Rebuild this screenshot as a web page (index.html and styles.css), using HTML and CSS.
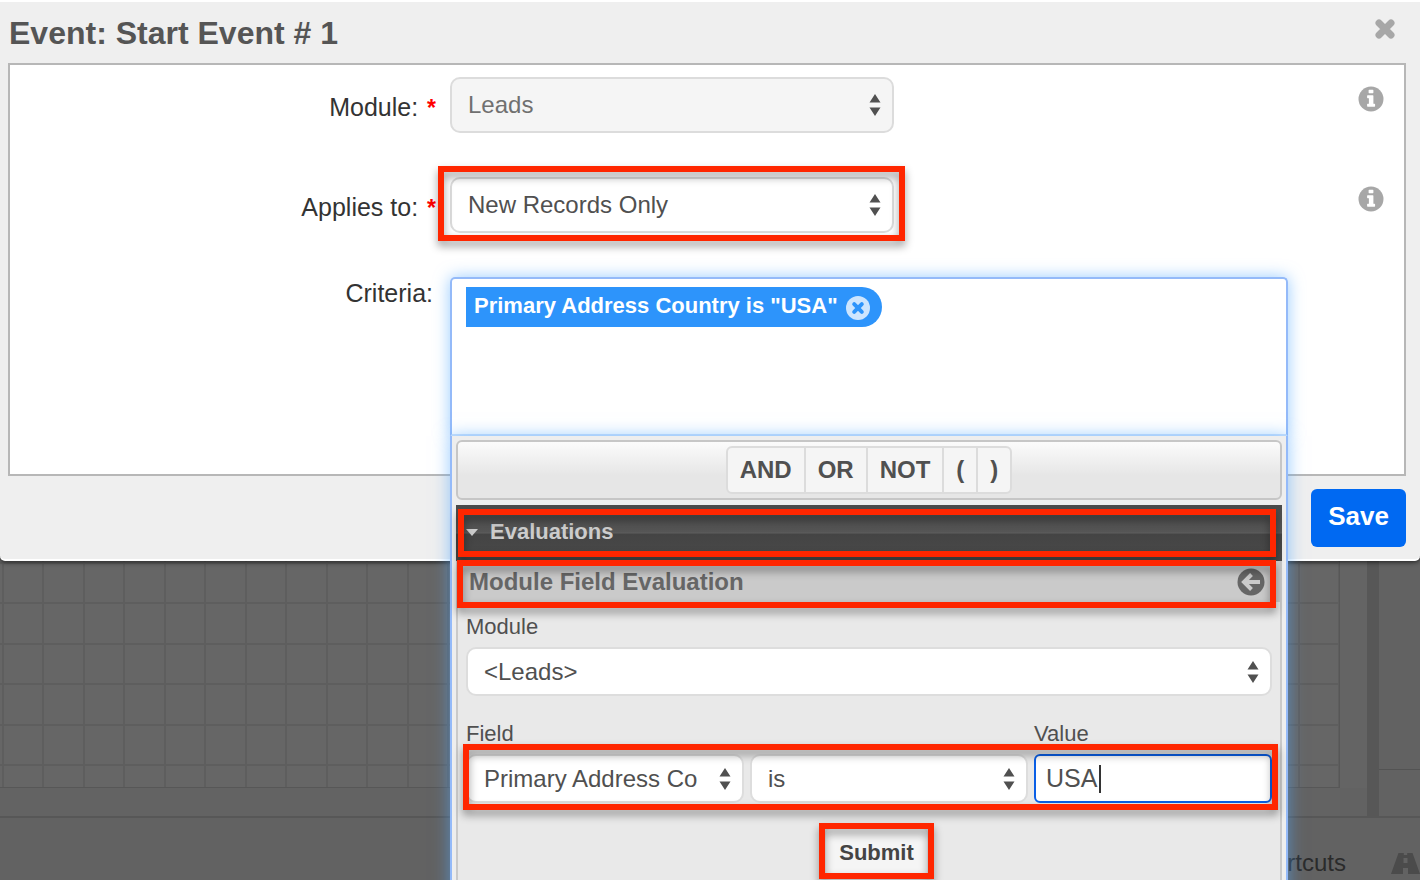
FILE: index.html
```html
<!DOCTYPE html>
<html lang="en">
<head>
<meta charset="utf-8">
<title>Event: Start Event # 1</title>
<link rel="stylesheet" href="styles.css">
</head>
<body>
<svg class="sprite" aria-hidden="true">
  <symbol id="updown" viewBox="0 0 12 22"><path d="M6 0l5.500 8.500H.5zM6 22L.5 13.500h11z"/></symbol>
  <symbol id="info" viewBox="0 0 26 26"><circle cx="13" cy="13" r="12.500"/><path fill="#fff" d="M11.200 3.800h3.600a.6.6 0 0 1 .6.6v2.200a.6.6 0 0 1-.6.6h-3.600a.6.6 0 0 1-.6-.6V4.400a.6.6 0 0 1 .6-.6zM9.700 9.200h5.100a.6.6 0 0 1 .6.6v7.900h1.100a.6.6 0 0 1 .6.6v1.800a.6.6 0 0 1-.6.6H9.700a.6.6 0 0 1-.6-.6v-1.800a.6.6 0 0 1 .6-.6h1.200V12.200H9.700a.6.6 0 0 1-.6-.6V9.800a.6.6 0 0 1 .6-.6z"/></symbol>
</svg>
<div class="screen">
  <div class="workspace">
    <div class="designer">
      <div class="canvas"></div>
      <div class="track-right"></div>
      <div class="track-bottom"></div>
    </div>
    <div class="sidebar"><div class="sidebar-block"></div></div>
    <div class="statusbar">
      <span>Shortcuts</span>
      <svg class="road" viewBox="0 0 29 21"><path fill-rule="evenodd" d="M7.500 0h14L29 21H0zM12.800 0v2h3.400V0zM12.500 5v5h4V5zM12 15v6h5v-6z"/></svg>
    </div>
  </div>

  <div class="overlay">
    <form class="dialog" role="dialog" aria-labelledby="dialog-title">
      <header class="dialog-head">
        <h1 id="dialog-title">Event: Start Event # 1</h1>
        <button class="close" type="button" aria-label="Close">
          <svg viewBox="0 0 22 22"><path d="M5 5l12 12M17 5L5 17"/></svg>
        </button>
      </header>

      <div class="panel">
        <label class="label" for="module">Module: <span class="required">*</span></label>
        <div class="select short">
          <select id="module" disabled><option>Leads</option></select>
          <svg><use href="#updown"/></svg>
        </div>
        <button class="info" type="button" aria-label="About module"><svg><use href="#info"/></svg></button>

        <label class="label" for="applies">Applies to: <span class="required">*</span></label>
        <div class="select short">
          <select id="applies"><option>New Records Only</option></select>
          <svg><use href="#updown"/></svg>
          <span class="mark mark-applies"></span>
        </div>
        <button class="info" type="button" aria-label="About applies to"><svg><use href="#info"/></svg></button>

        <span class="label label-top" id="criteria-label">Criteria:</span>
        <div class="criteria" role="group" aria-labelledby="criteria-label">
          <div class="criteria-box">
            <span class="tag">Primary Address Country is "USA"
              <button type="button" aria-label="Remove criterion">
                <svg viewBox="0 0 24 24"><circle cx="12" cy="12" r="12"/><path d="M8.200 8.200l7.600 7.600M15.800 8.200l-7.600 7.600"/></svg>
              </button>
            </span>
          </div>

          <div class="builder">
            <div class="toolbar">
              <div class="operators">
                <button type="button">AND</button><button type="button">OR</button><button type="button">NOT</button><button type="button">(</button><button type="button">)</button>
              </div>
            </div>

            <div class="section-head">
              <svg class="caret-down" viewBox="0 0 12 7"><path d="M0 0h12L6 7z"/></svg>
              <h2>Evaluations</h2>
              <span class="mark mark-section"></span>
            </div>

            <div class="evaluation">
              <div class="evaluation-head">
                <h3>Module Field Evaluation</h3>
                <button class="back" type="button" aria-label="Back">
                  <svg viewBox="0 0 28 28"><circle cx="14" cy="14" r="13.500"/><path d="M14.500 6.500L7 14l7.500 7.500M7.500 14H23"/></svg>
                </button>
                <span class="mark mark-evaluation"></span>
              </div>
              <div class="evaluation-body">
                <label class="caption" for="eval-module">Module</label>
                <div class="select small">
                  <select id="eval-module"><option>&lt;Leads&gt;</option></select>
                  <svg><use href="#updown"/></svg>
                </div>
                <div class="captions">
                  <label class="caption" for="eval-field">Field</label>
                  <label class="caption" for="eval-value">Value</label>
                </div>
                <div class="fields">
                  <div class="select small">
                    <select id="eval-field"><option>Primary Address Country</option></select>
                    <svg><use href="#updown"/></svg>
                  </div>
                  <div class="select small">
                    <select aria-label="Operator"><option>is</option></select>
                    <svg><use href="#updown"/></svg>
                  </div>
                  <div class="value">
                    <input id="eval-value" type="text" value="USA">
                    <span class="text-cursor"></span>
                  </div>
                  <span class="mark mark-fields"></span>
                </div>
                <div class="actions">
                  <button class="submit" type="submit">Submit<span class="mark mark-submit"></span></button>
                </div>
              </div>
            </div>
          </div>
        </div>
      </div>

      <footer class="dialog-foot"><button class="save" type="button">Save</button></footer>
    </form>
  </div>
</div>
</body>
</html>
```
FILE: styles.css
```css
* { box-sizing: border-box; }

body {
  margin: 0;
  color: #444;
  font: 25px/30px "Liberation Sans", Arial, sans-serif;
}

h1, h2, h3 { margin: 0; }

button, select, input {
  margin: 0;
  padding: 0;
  border: 0;
  background: none;
  color: inherit;
  font: inherit;
}

svg { display: block; fill: currentColor; }
.sprite { position: absolute; width: 0; height: 0; }

.screen {
  display: grid;
  grid-template: 100vh / minmax(0, 1fr);
  overflow: hidden;
}
.workspace, .overlay { grid-area: 1 / 1; min-height: 0; }

/* Dimmed designer behind the dialog */
.workspace {
  display: grid;
  grid-template: minmax(0, 1fr) 64px / minmax(0, 1fr) 41px;
  background: #626262;
}
.designer {
  display: grid;
  grid-template: minmax(0, 1fr) 28px / minmax(0, 1fr) 27px;
  border-right: 12px solid #575757;
}
.canvas {
  border-right: 1px solid #575757;
  border-bottom: 1px solid #575757;
  background-color: #666;
  background-image:
    linear-gradient(90deg, #5e5e5e 2px, transparent 2px 40px, #5e5e5e 40px 42px, transparent 42px),
    linear-gradient(#5e5e5e 2px, transparent 2px 41px, #5e5e5e 41px 43px, transparent 43px);
  background-size: 81px 81px;
  background-position: 2px 35px;
}
.track-right { background: #646464; }
.track-bottom { background: #636363; }
.sidebar { display: flex; flex-direction: column; justify-content: flex-end; }
.sidebar-block { height: 47px; border-top: 1px solid #535353; }
.statusbar {
  grid-column: 1 / -1;
  display: flex;
  justify-content: flex-end;
  gap: 45px;
  padding-top: 30px;
  border-top: 2px solid #575757;
  color: #2b2b2b;
  font-size: 24px;
  overflow: hidden;
}
.road { flex: none; width: 29px; height: 21px; margin-top: 5px; color: #4b4b4b; }

/* Dialog */
.dialog {
  background: #efefef;
  border: solid #fff;
  border-width: 2px 0;
  border-radius: 0 0 5px 5px;
  box-shadow: 0 1px 5px rgba(0, 0, 0, .7);
}
.dialog-head {
  display: flex;
  align-items: center;
  justify-content: space-between;
  height: 61px;
  padding: 0 24px 0 9px;
}
.dialog-head h1 { color: #555; font-size: 32px; }
.close { color: #a7a7a7; padding-bottom: 7px; }
.close svg { width: 22px; height: 22px; stroke: currentColor; stroke-width: 7; stroke-linecap: round; }

.panel {
  display: grid;
  grid-template-columns: minmax(0, 426fr) minmax(0, 838fr) 102px;
  column-gap: 14px;
  row-gap: 40px;
  align-items: start;
  margin: 0 14px 0 8px;
  padding: 12px 0 38px;
  border: 2px solid #b7b7b7;
  background: #fff;
}
.label { color: #333; line-height: 60px; text-align: right; }
.label-top { padding-right: 3px; line-height: 33px; }
.required { margin-left: 2px; color: #f00; font-size: 23px; font-weight: bold; line-height: 1; }

.select { position: relative; display: grid; align-items: center; color: #505050; }
.select select, .select > svg { grid-area: 1 / 1; }
.select select {
  appearance: none;
  width: 100%;
  min-width: 0;
  height: 56px;
  padding: 0 44px 0 16px;
  border: 2px solid #dcdcdc;
  border-radius: 10px;
  background: #fff;
  font-size: 24px;
  opacity: 1;
}
.select select:disabled { background: #f5f5f5; color: #707070; }
.select > svg { justify-self: end; width: 12px; height: 22px; margin-right: 13px; pointer-events: none; }
.select.short { width: 53%; }
.select.small select { height: 49px; border-color: #ddd; }

.info { justify-self: end; margin: 9px 20px 0 0; color: #a7a7a7; }
.info svg { width: 26px; height: 26px; }

.criteria { position: relative; }
.criteria-box {
  min-height: 159px;
  padding: 8px 14px;
  border: 2px solid #94baf9;
  border-bottom-color: #cfe2fb;
  border-radius: 5px 5px 0 0;
  box-shadow: 0 0 16px rgba(82, 168, 255, .6);
}
.tag {
  display: inline-flex;
  align-items: center;
  gap: 8px;
  height: 40px;
  padding: 0 12px 2px 8px;
  border-radius: 0 20px 20px 0;
  background: #2d94fb;
  color: #fff;
  font-size: 22px;
  font-weight: bold;
  white-space: nowrap;
}
.tag button { color: #cde5fe; padding-top: 3px; }
.tag svg { width: 24px; height: 24px; }
.tag path { stroke: #2d94fb; stroke-width: 4; stroke-linecap: round; }

/* Expression builder opened under the criteria field */
.builder {
  position: absolute;
  top: 100%;
  left: 0;
  right: 0;
  padding: 4px 4px 40px;
  border: 2px solid #94baf9;
  border-width: 0 2px 2px;
  background: #eee;
  box-shadow: 0 0 16px rgba(82, 168, 255, .6);
}
.toolbar {
  display: flex;
  justify-content: center;
  margin-bottom: 5px;
  padding: 4px;
  border: 2px solid #c6c6c6;
  border-radius: 6px;
  background: linear-gradient(#fbfbfb, #e6e6e6 60%);
}
.operators {
  display: flex;
  border: 2px solid #dcdcdc;
  border-radius: 6px;
  background: #f5f5f5;
  color: #505050;
  font-size: 24px;
  font-weight: bold;
}
.operators button { height: 44px; padding: 0 12px; }
.operators button + button { border-left: 2px solid #dcdcdc; }

.section-head {
  position: relative;
  display: flex;
  align-items: center;
  gap: 12px;
  height: 56px;
  padding: 0 10px 2px;
  background: linear-gradient(#4b4b4b, #555 27px, #5e5e5e 28px, #444 29px, #4a4a4a);
  color: #ccc;
}
.section-head h2 { font-size: 22px; }
.caret-down { width: 12px; height: 7px; }

.evaluation { border: solid #cacaca; border-width: 0 2px; background: #e9e9e9; }
.evaluation-head {
  position: relative;
  display: flex;
  align-items: center;
  justify-content: space-between;
  height: 41px;
  padding: 0 15px 0 11px;
  background: #cacaca;
  color: #666;
}
.evaluation-head h3 { font-size: 24px; }
.back svg { width: 28px; height: 28px; }
.back path { fill: none; stroke: #cacaca; stroke-width: 4; }
.evaluation-body { padding: 10px 8px; }
.caption { display: block; margin-bottom: 5px; color: #505050; font-size: 22px; }
.captions, .fields {
  display: grid;
  grid-template-columns: 278fr 278fr 238fr;
  column-gap: 6px;
}
.captions { margin-top: 23px; }
.captions .caption:last-child { grid-column: 3; }
.fields { position: relative; }
.value { display: grid; align-items: center; }
.value input, .text-cursor { grid-area: 1 / 1; }
.value input {
  width: 100%;
  min-width: 0;
  height: 49px;
  padding: 0 10px;
  border: 2px solid #0a5fe6;
  border-radius: 6px;
  background: #fff;
  color: #505050;
}
.text-cursor { width: 2px; height: 28px; margin-left: 65px; background: #333; }
.actions { display: flex; justify-content: center; padding: 26px 0 0 15px; }
.submit {
  position: relative;
  height: 48px;
  padding: 0 13px;
  border-radius: 5px;
  background: #f5f5f5;
  color: #444;
  font-size: 22px;
  font-weight: bold;
}

/* Call-out frames */
.mark {
  position: absolute;
  border: 6px solid #ff2600;
  filter: drop-shadow(0 5px 4px rgba(0, 0, 0, .4));
  pointer-events: none;
}
.mark-applies { inset: -11px -11px -8px -12px; }
.mark-section { inset: 4px 6px 4px 2px; }
.mark-evaluation { inset: -1px 4px -6px -1px; }
.mark-fields { inset: -10px -6px -7px -3px; }
.mark-submit { inset: -6px -7px -2px; }

.dialog-foot { display: flex; justify-content: flex-end; padding: 13px 14px 12px; }
.save {
  height: 58px;
  padding: 0 17px 4px;
  border-radius: 6px;
  background: #0069f2;
  color: #fff;
  font-size: 26px;
  font-weight: bold;
}
```
